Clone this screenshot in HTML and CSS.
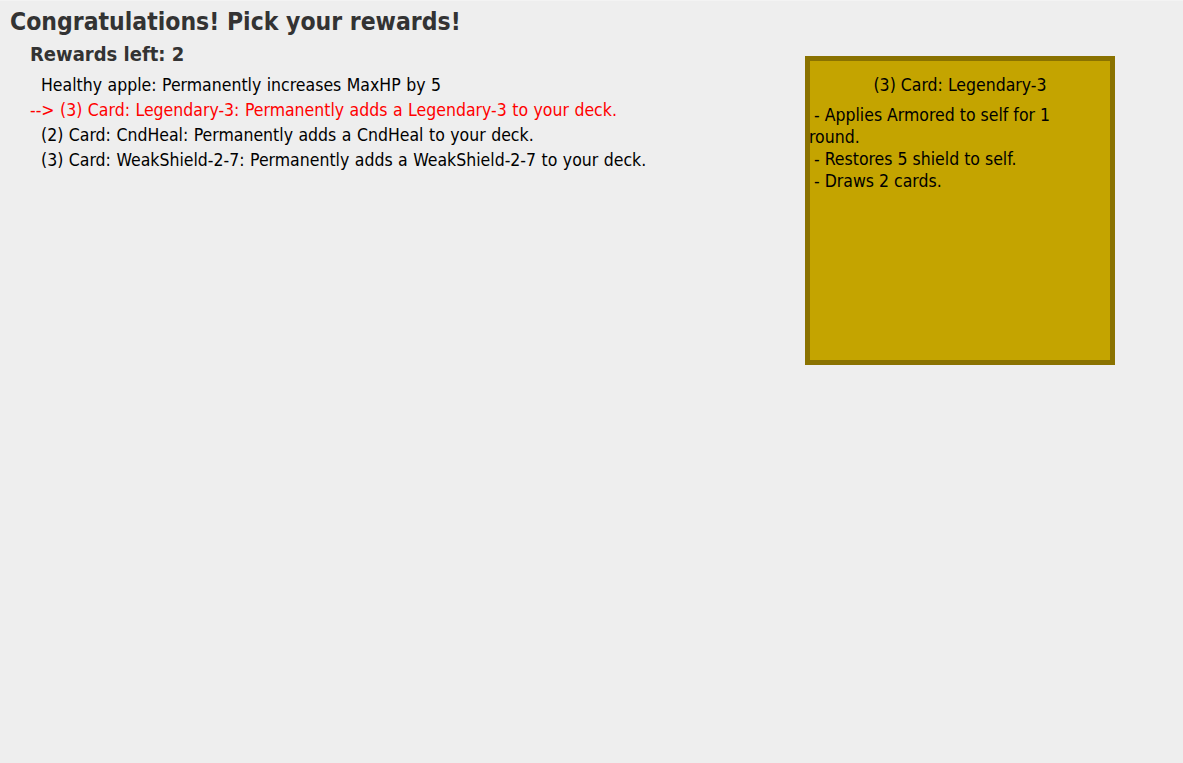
FILE: index.html
```html
<!DOCTYPE html>
<html>
<head>
<meta charset="utf-8">
<link rel="stylesheet" href="styles.css">
</head>
<body>
<div class="screen">
  <h1 class="title">Congratulations! Pick your rewards!</h1>
  <div class="main">
    <div class="rewards">
      <h2 class="left">Rewards left: 2</h2>
      <ul class="list">
        <li class="item">  Healthy apple: Permanently increases MaxHP by 5</li>
        <li class="item selected">--&gt; (3) Card: Legendary-3: Permanently adds a Legendary-3 to your deck.</li>
        <li class="item">  (2) Card: CndHeal: Permanently adds a CndHeal to your deck.</li>
        <li class="item">  (3) Card: WeakShield-2-7: Permanently adds a WeakShield-2-7 to your deck.</li>
      </ul>
    </div>
    <div class="card">
      <div class="card-title">(3) Card: Legendary-3</div>
      <div class="card-body">
        <div class="card-line"> - Applies Armored to self for 1 round.</div>
        <div class="card-line"> - Restores 5 shield to self.</div>
        <div class="card-line"> - Draws 2 cards.</div>
      </div>
    </div>
  </div>
</div>
</body>
</html>
```

FILE: styles.css
```css
html, body {
  margin: 0;
  padding: 0;
  background: #eeeeee;
}
body {
  font-family: "DejaVu Sans Condensed", "DejaVu Sans", sans-serif;
  color: #000;
  width: 1183px;
  height: 763px;
  overflow: hidden;
}
.screen {
  border-top: 1px solid #f3f3f3;
}
.title {
  margin: 0;
  padding: 6px 0 0 10px;
  font-size: 24.5px;
  line-height: 30px;
  font-weight: bold;
  color: #333333;
}
.main {
  display: flex;
  align-items: flex-start;
}
.rewards {
  flex: 1;
  padding-left: 30px;
}
.left {
  margin: 0;
  padding-top: 5px;
  font-size: 20px;
  line-height: 24px;
  font-weight: bold;
  color: #333333;
}
.list {
  list-style: none;
  margin: 0;
  padding: 7px 0 0 0;
}
.item {
  white-space: pre;
  font-size: 17.5px;
  line-height: 25px;
  word-spacing: 0.5px;
}
.selected {
  color: #ff0000;
}
.card {
  width: 300px;
  height: 299px;
  margin: 19px 68px 0 0;
  background: #c4a400;
  border: 5px solid #8a7200;
}
.card-title {
  text-align: center;
  font-size: 17.5px;
  line-height: 22px;
  padding-top: 13px;
}
.card-body {
  margin-left: -1px;
  padding-top: 8px;
  font-size: 17.5px;
  line-height: 22px;
  width: 290px;
}
.card-line {
  white-space: pre-wrap;
}
```
